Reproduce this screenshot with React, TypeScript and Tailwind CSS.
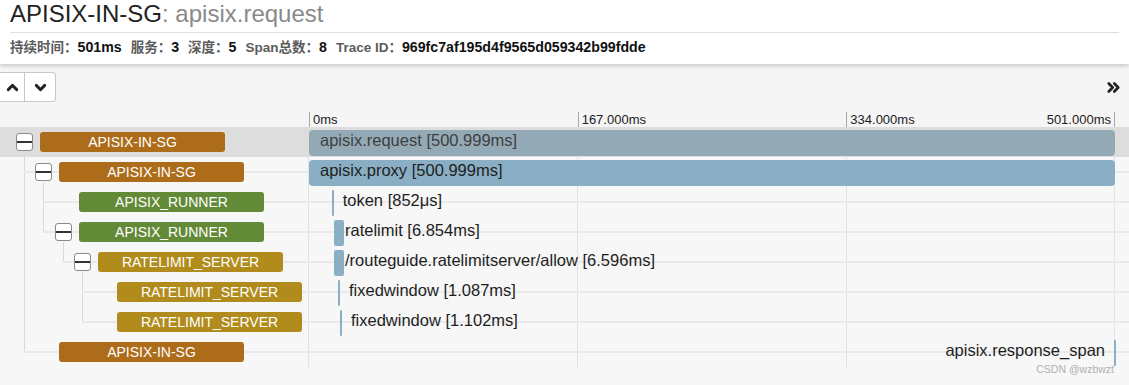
import { ChevronUp, ChevronDown, ChevronsRight } from "lucide-react";

type Row = {
    service: string;
    color: string;
    pad: string;
    toggle: boolean;
    line: string;
    op: string;
    left: number;
    width: number;
    alignRight?: boolean;
    active?: boolean;
};

const BROWN = "bg-[#ad6c19]";
const GREEN = "bg-[#638a37]";
const GOLD = "bg-[#b18c1d]";

const rows: Row[] = [
    { service: "APISIX-IN-SG", color: BROWN, pad: "pl-[16px]", toggle: true, line: "left-[0px]", op: "apisix.request [500.999ms]", left: 0, width: 806, active: true },
    { service: "APISIX-IN-SG", color: BROWN, pad: "pl-[35px]", toggle: true, line: "left-[24px]", op: "apisix.proxy [500.999ms]", left: 0, width: 806 },
    { service: "APISIX_RUNNER", color: GREEN, pad: "pl-[79px]", toggle: false, line: "left-[43px]", op: "token [852μs]", left: 22.7, width: 2 },
    { service: "APISIX_RUNNER", color: GREEN, pad: "pl-[55px]", toggle: true, line: "left-[43px]", op: "ratelimit [6.854ms]", left: 25, width: 10 },
    { service: "RATELIMIT_SERVER", color: GOLD, pad: "pl-[74px]", toggle: true, line: "left-[62px]", op: "/routeguide.ratelimitserver/allow [6.596ms]", left: 25, width: 10 },
    { service: "RATELIMIT_SERVER", color: GOLD, pad: "pl-[117px]", toggle: false, line: "left-[82px]", op: "fixedwindow [1.087ms]", left: 29, width: 2 },
    { service: "RATELIMIT_SERVER", color: GOLD, pad: "pl-[117px]", toggle: false, line: "left-[82px]", op: "fixedwindow [1.102ms]", left: 31, width: 2 },
    { service: "APISIX-IN-SG", color: BROWN, pad: "pl-[59px]", toggle: false, line: "left-[24px]", op: "apisix.response_span", left: 805, width: 2, alignRight: true },
];

// summary line under the title
const stats = [
    { label: "持续时间：", value: "501ms" },
    { label: "服务：", value: "3" },
    { label: "深度：", value: "5" },
    { label: "Span总数：", value: "8" },
    { label: "Trace ID：", value: "969fc7af195d4f9565d059342b99fdde" },
];

function Toggle() {
    return (
        <div className="w-[17px] h-[18px] mr-[7px] shrink-0 bg-white border border-[#8a8a8a] rounded-[3px] flex items-center">
            <div className="w-full h-[2px] bg-[#333]" />
        </div>
    );
}

function SpanRow({ row }: { row: Row }) {
    const wide = row.width > 100;
    return (
        <div className={"relative flex h-[30px] " + (row.active ? "bg-[#dddddd]" : "")}>
            {!row.active && <div className={"absolute right-0 top-[14px] h-[2px] bg-[#e9e9e9] " + row.line} />}
            <div className={"relative flex items-center w-[309px] shrink-0 " + row.pad}>
                {row.toggle && <Toggle />}
                <div className={"w-[185px] h-[20px] rounded-[3px] text-white text-[14px] leading-[20px] text-center " + row.color}>
                    {row.service}
                </div>
            </div>
            <div className="relative w-[806px] h-full">
                <div
                    className={"absolute top-[3px] h-[26px] " + (wide ? "rounded-[4px] " : "rounded-[2px] ") + (row.active ? "bg-[#93a9b5]" : "bg-[#8aafc4]")}
                    style={{ left: row.left, width: row.width }}
                />
                <div
                    className={"absolute top-[4px] leading-[18px] text-[16.5px] whitespace-nowrap " + (row.active ? "text-[#3f3f3f]" : "text-[#1e1e1e]")}
                    style={row.alignRight ? { right: 10 } : { left: row.left + 11 }}
                >
                    {row.op}
                </div>
            </div>
        </div>
    );
}

export default function App() {
    return (
        <div className="relative w-[1129px] h-[385px] overflow-hidden bg-[#f7f7f7] text-[#222] font-['Liberation_Sans','Noto_Sans_CJK_SC',sans-serif]">
            <header className="relative z-10 bg-white h-[64px] shadow-[0_2px_4px_rgba(0,0,0,0.18)]">
                <div className="mx-[10px] h-[33px] border-b border-[#dedede] text-[24px] leading-[28px]">
                    APISIX-IN-SG<span className="text-[#8a8a8a]">: apisix.request</span>
                </div>
                <div className="px-[10px] h-[30px] flex items-center text-[13.5px] font-bold text-[#5c5c5c]">
                    {stats.map((s) => (
                        <span key={s.label} className="mr-[9px] whitespace-nowrap">
                            {s.label}
                            <span className="text-[#111] text-[14.2px]">{s.value}</span>
                        </span>
                    ))}
                </div>
            </header>

            <div className="h-[46px] flex items-center justify-between bg-[#f5f5f5]">
                <div className="flex h-[30px] bg-white border border-l-0 border-[#c8c8c8] rounded-r-[4px]">
                    <button className="w-[25px] flex items-center justify-center border-r border-[#c8c8c8]">
                        <ChevronUp size={17} strokeWidth={4} className="text-[#222]" />
                    </button>
                    <button className="w-[30px] flex items-center justify-center">
                        <ChevronDown size={17} strokeWidth={4} className="text-[#222]" />
                    </button>
                </div>
                <ChevronsRight size={19} strokeWidth={3.4} className="mr-[6px] text-[#222]" />
            </div>

            <div className="flex h-[17px] bg-[#f5f5f5] text-[13px] leading-[15px] text-[#222]">
                <div className="w-[309px] shrink-0" />
                <div className="w-[806px] grid grid-cols-3 mt-[2px] h-[15px]">
                    <div className="border-l border-[#a8a8a8] pl-[3px]">0ms</div>
                    <div className="border-l border-[#a8a8a8] pl-[3px]">167.000ms</div>
                    <div className="border-l border-r border-[#a8a8a8] pl-[3px] pr-[3px] flex justify-between">
                        <span>334.000ms</span>
                        <span>501.000ms</span>
                    </div>
                </div>
            </div>

            <div className="relative">
                <div className="absolute inset-y-0 left-[308px] w-[807px] grid grid-cols-3 pointer-events-none">
                    <div className="border-l border-[#e2e2e2]" />
                    <div className="border-l border-[#e2e2e2]" />
                    <div className="border-l border-r border-[#e2e2e2]" />
                </div>
                <svg className="absolute left-0 top-0 pointer-events-none" width="309" height="240">
                    <g stroke="#d9d9d9" strokeWidth="1">
                        <line x1="24.5" y1="25" x2="24.5" y2="226" />
                        <line x1="43.5" y1="55" x2="43.5" y2="106" />
                        <line x1="63.5" y1="115" x2="63.5" y2="136" />
                        <line x1="82.5" y1="145" x2="82.5" y2="196" />
                    </g>
                </svg>
                <div className="relative">
                    {rows.map((r, i) => (
                        <SpanRow key={i} row={r} />
                    ))}
                </div>
            </div>

            <div className="absolute right-[15px] bottom-[7px] text-[10.5px] text-[#b0b0b0]">CSDN @wzbwzt</div>
        </div>
    );
}
